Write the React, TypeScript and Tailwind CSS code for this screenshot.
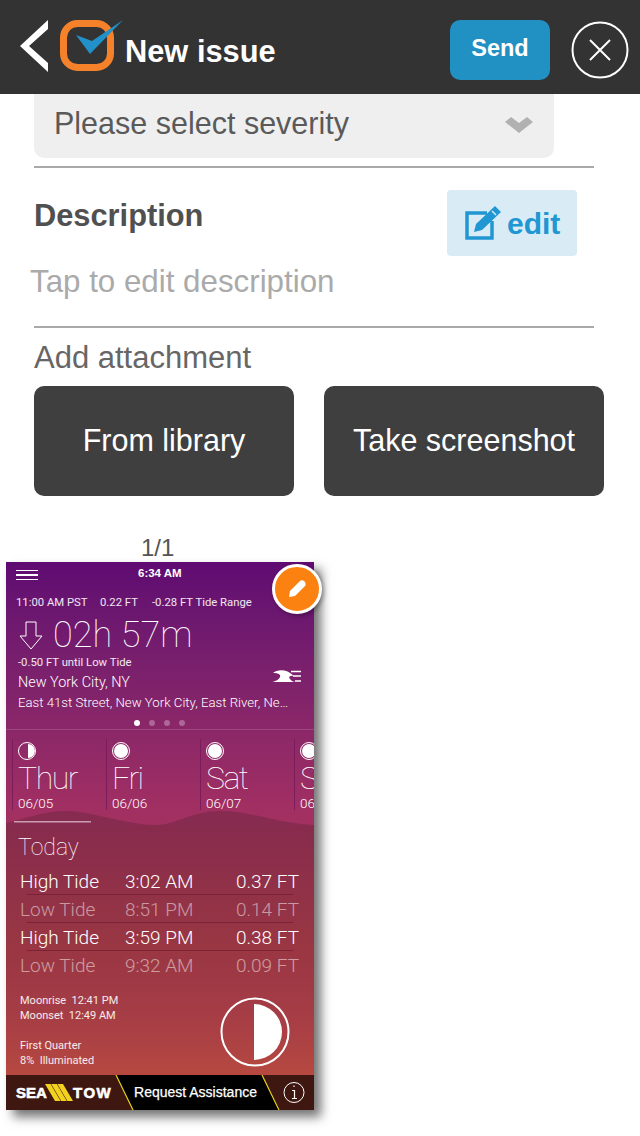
const tides = [
  { label: 'High Tide', time: '3:02 AM', height: '0.37 FT', dim: false },
  { label: 'Low Tide', time: '8:51 PM', height: '0.14 FT', dim: true },
  { label: 'High Tide', time: '3:59 PM', height: '0.38 FT', dim: false },
  { label: 'Low Tide', time: '9:32 AM', height: '0.09 FT', dim: true },
]

const days = [
  { name: 'Thur', date: '06/05', half: true },
  { name: 'Fri', date: '06/06', half: false },
  { name: 'Sat', date: '06/07', half: false },
  { name: 'Sun', date: '06/08', half: false },
]

function Header() {
  return (
    <div className="flex h-[94px] items-start bg-[#333333]">
      <svg className="ml-[20px] mt-[20px] shrink-0" width="28" height="52" viewBox="0 0 28 52">
        <polygon points="28,0 28,9 9,26 28,43 28,52 0,26" fill="#fff" />
      </svg>
      <svg className="ml-[12px] mt-[20px] shrink-0" width="64" height="54" viewBox="0 0 64 54">
        <rect x="3.5" y="3.5" width="47" height="44" rx="14" fill="none" stroke="#f5822a" strokeWidth="7" />
        <polygon points="16,15 32,21 63,0 30,34" fill="#2291c9" />
      </svg>
      <span className="ml-px mt-[34px] text-[30.8px] leading-[36px] font-bold text-white">New issue</span>
      <button className="ml-auto mt-[20px] h-[60px] w-[100px] rounded-[10px] bg-[#2190c3] pb-[2px] text-[23.5px] font-bold text-white">Send</button>
      <svg className="ml-[21px] mr-[11px] mt-[21px] shrink-0" width="58" height="58" viewBox="0 0 58 58">
        <circle cx="29" cy="29" r="27.5" fill="none" stroke="#fff" strokeWidth="2" />
        <path d="M19 19 L39 39 M39 19 L19 39" stroke="#fff" strokeWidth="2" />
      </svg>
    </div>
  )
}

function IssueForm() {
  return (
    <div>
      <div className="ml-[34px] flex h-[64px] w-[520px] items-center justify-between rounded-b-[10px] bg-[#efefef] pl-[20px] pr-[21px]">
        <span className="mb-[5px] text-[30.5px] text-[#5a5a5a]">Please select severity</span>
        <svg className="mb-[2px]" width="28" height="16" viewBox="0 0 28 16">
          <polygon points="0,5 6,0 14,6 22,0 28,5 14,16" fill="#b1b1b1" />
        </svg>
      </div>
      <div className="ml-[34px] mt-[8px] h-[2px] w-[560px] bg-[#a9a9a9]" />
      <div className="ml-[34px] mt-[22px] flex w-[543px] items-start justify-between">
        <span className="mt-[8px] text-[30.8px] leading-[36px] font-bold text-[#505050]">Description</span>
        <button className="flex h-[66px] w-[130px] items-center rounded-[4px] bg-[#d9ecf6] pl-[18px] text-[#2097d3]">
          <svg width="36" height="36" viewBox="0 0 36 36" fill="none">
            <path d="M22 8 H2 V33 H27 V16" stroke="#2097d3" strokeWidth="3.5" />
            <path d="M30 1 L36 7 L17 25 L9 27 L11 19 Z" fill="#2097d3" />
            <path d="M27 6 L31 10" stroke="#d9ecf6" strokeWidth="1.5" />
          </svg>
          <span className="ml-[6px] text-[30px] font-bold">edit</span>
        </button>
      </div>
      <div className="ml-[30px] mt-[8px] text-[31.3px] leading-[36px] text-[#aaaaaa]">Tap to edit description</div>
      <div className="ml-[34px] mt-[26px] h-[2px] w-[560px] bg-[#a9a9a9]" />
      <div className="ml-[34px] mt-[14px] text-[31px] leading-[32px] text-[#666666]">Add attachment</div>
      <div className="ml-[34px] mt-[12px] flex gap-[30px]">
        <button className="h-[110px] w-[260px] rounded-[10px] bg-[#3f3f3f] text-[30.5px] text-white">From library</button>
        <button className="h-[110px] w-[280px] rounded-[10px] bg-[#3f3f3f] text-[30.5px] text-white">Take screenshot</button>
      </div>
    </div>
  )
}

function DayColumn(props: { name: string; date: string; half: boolean }) {
  return (
    <div className="h-[71px] w-[94px] shrink-0 border-l border-[#7d1c5c] pl-[5px] pt-[3px]">
      <div className="flex h-[18px] w-[18px] items-center justify-center overflow-hidden rounded-full border border-white">
        {props.half ? <div className="ml-[8px] h-[14px] w-[7px] rounded-r-full bg-white" /> : <div className="h-[14px] w-[14px] rounded-full bg-white" />}
      </div>
      <div className="mt-[-1px] font-['Roboto'] text-[32px] leading-[38px] font-thin tracking-[-1.5px] text-white">{props.name}</div>
      <div className="mt-[-1px] font-['Roboto'] text-[13.5px] leading-[14px] font-light text-white">{props.date}</div>
    </div>
  )
}

function TideRow(props: { label: string; time: string; height: string; dim: boolean }) {
  return (
    <div className={'flex h-[28px] items-center font-[\'Roboto\'] text-[19px] font-light ' + (props.dim ? 'text-white/50' : 'text-white')}>
      <span className="ml-[14px] w-[105px]">{props.label}</span>
      <span className="w-[100px]">{props.time}</span>
      <span className="w-[74px] text-right">{props.height}</span>
    </div>
  )
}

function TideScreenshot() {
  return (
    <div className="relative ml-[6px] h-[548px] w-[308px] bg-gradient-to-b from-[#5f0a72] via-[#a12f62] via-45% to-[#ba4c38] shadow-[7px_7px_10px_rgba(0,0,0,0.55)]">
      <div className="relative h-[167px] overflow-hidden">
        <div className="flex h-[24px] items-center">
          <div className="ml-[10px] flex w-[22px] flex-col gap-[3px] pt-[2px]">
            <div className="h-[1.5px] bg-white" />
            <div className="h-[1.5px] bg-white" />
            <div className="h-[1.5px] bg-white" />
          </div>
          <span className="ml-[100px] text-[11.5px] font-bold text-white">6:34 AM</span>
        </div>
        <div className="mt-[11px] flex h-[12px] items-center pl-[10px] font-['Roboto'] text-[11.3px] text-white/90">
          <span className="w-[84px]">11:00 AM PST</span>
          <span className="w-[52px]">0.22 FT</span>
          <span>-0.28 FT Tide Range</span>
        </div>
        <div className="mt-[8px] flex h-[36px] items-center pl-[13px]">
          <svg width="24" height="29" viewBox="0 0 24 29" fill="none">
            <path d="M7 1 H17 V15 H23 L12 28 L1 15 H7 Z" stroke="#fff" strokeWidth="1" />
          </svg>
          <span className="ml-[10px] font-['Roboto'] text-[36px] leading-[36px] font-thin text-white">02h 57m</span>
        </div>
        <div className="ml-[12px] mt-[3px] font-['Roboto'] text-[11.3px] leading-[14px] text-white/90">-0.50 FT until Low Tide</div>
        <div className="ml-[12px] mt-[5px] font-['Roboto'] text-[14.4px] leading-[16px] font-light text-white">New York City, NY</div>
        <div className="ml-[12px] mt-[3px] whitespace-nowrap font-['Roboto'] text-[13.2px] leading-[18px] font-light text-white">East 41st Street, New York City, East River, Ne…</div>
        <div className="mt-[8px] flex justify-start gap-[9px] pl-[128px]">
          <div className="h-[6px] w-[6px] rounded-full bg-white" />
          <div className="h-[6px] w-[6px] rounded-full bg-white/30" />
          <div className="h-[6px] w-[6px] rounded-full bg-white/30" />
          <div className="h-[6px] w-[6px] rounded-full bg-white/30" />
        </div>
      </div>
      <div className="border-t border-white/15 pl-[6px] pt-[9px]">
        <div className="flex w-[302px] overflow-hidden">
          {days.map(d => <DayColumn key={d.name} name={d.name} date={d.date} half={d.half} />)}
        </div>
      </div>
      <div className="relative">
        <svg className="block" width="308" height="16" viewBox="0 0 308 16">
          <path d="M0 13 C25 7 40 1 60 1 C85 1 120 15 150 15 C170 15 185 1 215 1 C245 1 275 14 308 15 V16 H0 Z" fill="#872b50" />
          <rect x="8" y="11" width="77" height="1.5" fill="#ffffff" fillOpacity="0.55" />
        </svg>
        <div className="h-[252px] bg-gradient-to-b from-[#872b4d] via-[#9a3742] via-50% to-transparent pt-[6px]">
          <div className="ml-[12px] font-['Roboto'] text-[23px] leading-[32px] font-thin text-white">Today</div>
          <div className="relative mt-[4px]">
            {tides.map(t => <TideRow key={t.label + t.time} label={t.label} time={t.time} height={t.height} dim={t.dim} />)}
            <div className="absolute left-[21px] top-[26px] h-px w-[266px] bg-[#7c2238]" />
            <div className="absolute left-[21px] top-[54px] h-px w-[266px] bg-[#7c2238]" />
            <div className="absolute left-[21px] top-[82px] h-px w-[266px] bg-[#7c2238]" />
          </div>
          <div className="mt-[13px] flex justify-between pl-[14px] pr-[24px]">
            <div className="font-['Roboto'] text-[11px] leading-[15px] text-white/90">
              <div>Moonrise&nbsp; 12:41 PM</div>
              <div>Moonset&nbsp; 12:49 AM</div>
              <div className="mt-[15px]">First Quarter</div>
              <div>8%&nbsp; Illuminated</div>
            </div>
            <svg className="mt-[4px]" width="70" height="70" viewBox="0 0 70 70">
              <circle cx="35" cy="35" r="33.5" fill="none" stroke="#fff" strokeWidth="2" />
              <path d="M34 7 A28 28 0 0 1 34 63 Z" fill="#fff" />
            </svg>
          </div>
        </div>
      </div>
      <div className="absolute bottom-0 left-0 flex h-[35px] w-full items-center overflow-hidden bg-[#3d1710]">
        <div className="absolute left-[110px] top-0 flex h-full w-[164px] items-center justify-center bg-black pr-[5px] [clip-path:polygon(0_0,89%_0,100%_100%,10%_100%)]">
          <span className="text-[14px] text-white [-webkit-text-stroke:0.25px_white]">Request Assistance</span>
        </div>
        <svg className="absolute left-0 top-0" width="308" height="35" viewBox="0 0 308 35">
          <path d="M110 0 L127 35 M256 0 L273 35" stroke="#e8d21d" strokeWidth="1.2" />
          <polygon points="39,9 44.6,9 54.6,26 49,26" fill="#f2d21f" />
          <polygon points="45.2,9 50.8,9 60.8,26 55.2,26" fill="#f2d21f" />
          <polygon points="51.4,9 57,9 67,26 61.4,26" fill="#f2d21f" />
          <circle cx="288" cy="17.5" r="10" fill="none" stroke="#fff" strokeWidth="1" />
          <path d="M288 10.5 V12 M286 15.5 H288.5 V23.5 M286 23.5 H291" stroke="#fff" strokeWidth="1.2" fill="none" />
        </svg>
        <span className="absolute left-[10px] top-[10px] text-[15px] leading-[15px] font-bold text-white [-webkit-text-stroke:0.6px_white]">SEA</span>
        <span className="absolute left-[67px] top-[10px] text-[15px] leading-[15px] font-bold tracking-[1.5px] text-white [-webkit-text-stroke:0.6px_white]">TOW</span>
      </div>
      {/* wave icon */}
      <svg className="absolute left-[266px] top-[108px]" width="30" height="13" viewBox="0 0 30 13">
        <path d="M0 12 C5 11 9 8 8 5 C6 3 3 3 1 3 C6 -1 15 -1 22 6 C18 5 16 7 18 9 C19 11 22 12 23 12 Z" fill="#fff" />
        <path d="M19 1.5 H29 M21 6 H29 M23 11 H29" stroke="#fff" strokeWidth="1.5" />
      </svg>
      {/* edit badge */}
      <div className="absolute left-[266px] top-[2px] flex h-[50px] w-[50px] items-center justify-center rounded-full border-[3px] border-white bg-[#fb8110] shadow-[2px_2px_4px_rgba(0,0,0,0.3)]">
        <svg width="20" height="20" viewBox="0 0 20 20">
          <path d="M13 2 C14 1 16 1 17.5 2.5 C19 4 19 6 18 7 L8 17 L2 18 L3 12 Z" fill="#fff" />
        </svg>
      </div>
    </div>
  )
}

export default function App() {
  return (
    <div className="h-[1136px] w-[640px] overflow-hidden bg-white font-['Liberation_Sans',Arial,sans-serif]">
      <Header />
      <IssueForm />
      <div className="mt-[38px] ml-[141px] text-[24px] leading-[28px] text-[#555555]">1/1</div>
      <TideScreenshot />
    </div>
  )
}
